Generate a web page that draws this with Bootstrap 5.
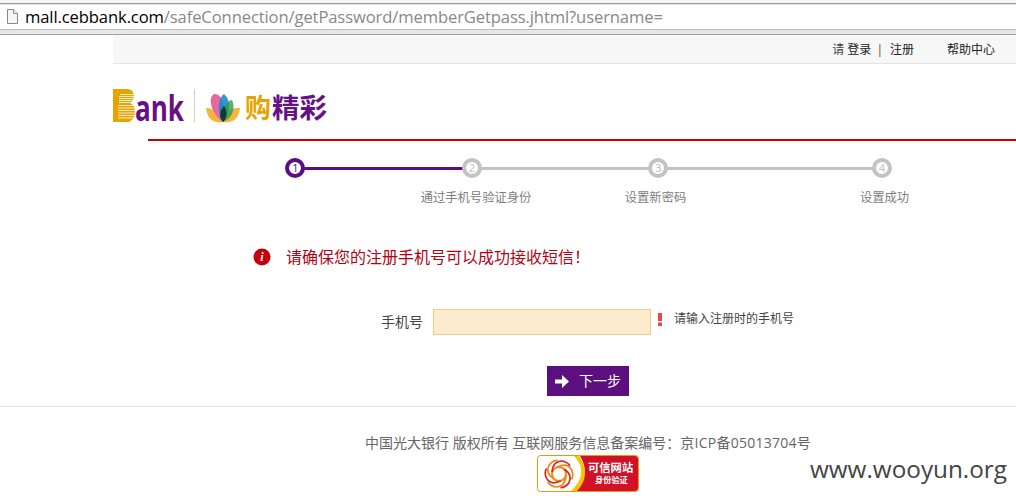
<!DOCTYPE html>
<html lang="zh-CN">
<head>
<meta charset="utf-8">
<meta name="viewport" content="width=device-width, initial-scale=1">
<title>找回密码</title>
<link rel="stylesheet" href="https://cdn.jsdelivr.net/npm/bootstrap@5.3.0/dist/css/bootstrap.min.css">
<style>
body{font-family:"Open Sans","Noto Sans CJK SC",sans-serif;font-size:12px;line-height:18px;color:#444;background:#fff;height:498px;overflow:hidden}
.chrome{height:35px;background:#f5f5f5;border-bottom:1px solid #a3a3a3;padding-top:3px}
.address{height:27px;background:#fff;border-top:1px solid #9c9c9c;border-bottom:1px solid #bbb;padding-left:6px;box-shadow:0 4px 0 #e6e7e6,inset 0 1px #e4e4e4}
.url{font-size:16.6px;letter-spacing:-.115px;line-height:25px;color:#888;margin-left:6px;white-space:nowrap}
.url b{font-weight:400;color:#000}
.topbar{height:29px;margin-left:113px;background:#f7f7f7;border-bottom:1px solid #e4e4e4;padding:1px 21px 0 0}
.topbar a{color:#222;text-decoration:none}
.brandrow{height:75px;padding:21px 0 0 113px}
.rule{height:2px;margin-left:148px;background:#c60000}
.steps{height:59px}
.steps svg,.brandrow svg{display:block}
.notice{height:56px;margin-top:29px;padding-left:253px}
.notice span{font-size:16px;margin-left:15px;color:#b80012}
.phone{height:26px;margin-top:24px;padding-left:381px}
.phone label{font-size:14px;width:52px}
.phone input{width:218px;height:26px;border:1px solid #f8ca82;border-radius:0;background:#fcebcf}
.next{width:82px;height:30px;margin:31px 0 0 547px;background:#5c1080;border:0;border-radius:0;color:#fff;font-size:14px;padding:0 0 0 8px}
.next span{margin:-2px 0 0 9px}
footer{position:relative;height:92px;margin-top:10px;border-top:1px solid #e2e2e2;padding-top:26px}
.copyright{font-size:14px;line-height:20px;color:#666;padding-left:365px;white-space:nowrap}
.copyright span{letter-spacing:.25px}
.seal{display:block;margin:2px 0 0 537px}
.watermark{position:absolute;right:9px;bottom:10px;font-size:24.3px;line-height:38px;color:#444}
</style>
</head>
<body>
<header>
<div class="chrome"><div class="address d-flex align-items-center">
<svg width="13" height="17" viewBox="0 0 13 17"><path d="M1.500 1.500h6l4 4v10h-10z" fill="#f5f5f5" stroke="#888"/><path d="M7.500 1.500v4h4" fill="#fff" stroke="#888"/></svg>
<div class="url"><b>mall.cebbank.com</b>/safeConnection/getPassword/memberGetpass.jhtml?username=</div>
</div></div>
<nav class="topbar d-flex justify-content-end align-items-center">
<span>请 <a href="#">登录</a></span><span style="margin:0 7px 0 5px">|</span><a href="#">注册</a><a href="#" style="margin-left:33px">帮助中心</a>
</nav>
<div class="brandrow">
<svg width="220" height="52" viewBox="0 0 220 52">
<path d="M0 4h15q6 1 6 7 0 5-4 7 5 2 5 9t-6 10H0z" fill="#e5a400"/>
<path d="M7 9.500h15M6 11.500h16M6 13.500h16M6 15.500h15M6 17.500h15M5 20.500h17M5 23h17M5 25.500h17M5 28h17M5 30.500h17M5 33h17" stroke="#fff" stroke-width=".8"/>
<text x="22" y="36" font-family="Open Sans" font-weight="700" font-size="36" fill="#671085" textLength="49" lengthAdjust="spacingAndGlyphs">ank</text>
<path d="M81.500 4v33" stroke="#ccc"/>
<g transform="translate(110 37)">
<path d="M0 0C-10 2-16-4-17-14q12 0 17 14M0 0C10 2 16-4 17-14 6-15 1-8 0 0" fill="#f5b63c"/>
<path d="M0 0C-11-7-16-24-9-28 0-29 3-13 0 0" fill="#e9679f"/>
<path d="M0 0C-7-12-4-25 1-28 8-22 8-10 0 0" fill="#1689c9" opacity=".87"/>
<path d="M0 0C-4-10 3-21 9-22 13-13 9-4 0 0" fill="#319950" opacity=".8"/>
<path d="M0 0C-5-5-3-12 1-16 5-10 4-4 0 0" fill="#073e37"/>
</g>
<text x="132" y="33" font-family="Noto Sans CJK SC" font-weight="700" font-size="27" fill="#e5a400" textLength="26" lengthAdjust="spacingAndGlyphs">购</text>
<text x="159" y="33" font-family="Noto Sans CJK SC" font-weight="700" font-size="27" fill="#671085" textLength="55" lengthAdjust="spacingAndGlyphs">精彩</text>
</svg>
</div>
<div class="rule"></div>
</header>
<main>
<div class="steps">
<svg width="1016" height="65" viewBox="0 0 1016 65" font-family="Open Sans,Noto Sans CJK SC" text-anchor="middle">
<path d="M472 27.500H882" stroke="#c3c3c3" stroke-width="3"/><path d="M295 27.500H463" stroke="#5c1080" stroke-width="3"/>
<g fill="#fff" stroke="#c3c3c3" stroke-width="4"><circle cx="295" cy="27" r="8" stroke="#5c1080"/><circle cx="472" cy="27" r="8"/><circle cx="658" cy="27" r="8"/><circle cx="882" cy="27" r="8"/></g>
<g font-size="11" fill="#bbb"><text x="295.500" y="31" fill="#5c1080">1</text><text x="472" y="31">2</text><text x="658.500" y="31">3</text><text x="882" y="31">4</text></g>
<g font-size="12.300" fill="#808080"><text x="476" y="60.500">通过手机号验证身份</text><text x="655.500" y="60.500">设置新密码</text><text x="884.500" y="60.500">设置成功</text></g>
</svg>
</div>
<div class="notice d-flex align-items-center">
<svg width="18" height="18" viewBox="0 0 18 18"><circle cx="9" cy="9" r="8.500" fill="#c60008"/><text x="9" y="13" text-anchor="middle" font-family="Liberation Serif" font-weight="700" font-style="italic" font-size="12" fill="#fff">i</text></svg>
<span>请确保您的注册手机号可以成功接收短信！</span>
</div>
<form class="phone d-flex align-items-center">
<label for="phone">手机号</label><input id="phone" class="form-control p-0">
<svg style="margin:-6px 0 0 7px" width="4" height="13" viewBox="0 0 4 13"><path d="M0 0h4v8H0zM0 9.500h4V13H0z" fill="#e94848"/></svg>
<span style="margin:-6px 0 0 12px">请输入注册时的手机号</span>
</form>
<button class="next btn d-flex align-items-center" type="button"><svg width="15" height="15" viewBox="0 0 15 15"><path d="M0 5.500h7V1l7 6.500L7 14V9.500H0z" fill="#fff"/></svg><span>下一步</span></button>
</main>
<footer>
<div class="copyright">中国光大银行 版权所有 互联网服务信息备案编号：<span>京ICP备05013704号</span></div>
<svg class="seal" width="102" height="37" viewBox="0 0 102 37">
<rect x=".5" y=".5" width="101" height="36" rx="3" fill="#fff" stroke="#e79a0a"/>
<path d="M43 1h55q3 0 3 3v29q0 3-3 3H39Q54 18 43 1" fill="#d01128"/>
<path d="M37 1h5q13 19-2 35h-6Q53 18 37 1" fill="#fac400"/>
<g fill="none" stroke-width="1.700" transform="translate(22 19)"><circle r="7" stroke="#f08a18" stroke-width="2"/>
<path d="M-7-2Q-6-13 3-13 9-12 11-8" stroke="#e2231a"/><path d="M-7-2Q-6-13 3-13 9-12 11-8" stroke="#ee8518" transform="rotate(60)"/><path d="M-7-2Q-6-13 3-13 9-12 11-8" stroke="#e2231a" transform="rotate(120)"/><path d="M-7-2Q-6-13 3-13 9-12 11-8" stroke="#ee8518" transform="rotate(180)"/><path d="M-7-2Q-6-13 3-13 9-12 11-8" stroke="#e2231a" transform="rotate(240)"/><path d="M-7-2Q-6-13 3-13 9-12 11-8" stroke="#ee8518" transform="rotate(300)"/></g>
<g fill="#fff" font-family="Noto Sans CJK SC" font-weight="700"><text x="51" y="16.500" font-size="11.300">可信网站</text><text x="58" y="28" font-size="8.200">身份验证</text></g>
</svg>
<div class="watermark">www.wooyun.org</div>
</footer>
<script src="https://cdn.jsdelivr.net/npm/bootstrap@5.3.0/dist/js/bootstrap.bundle.min.js"></script>
</body>
</html>
